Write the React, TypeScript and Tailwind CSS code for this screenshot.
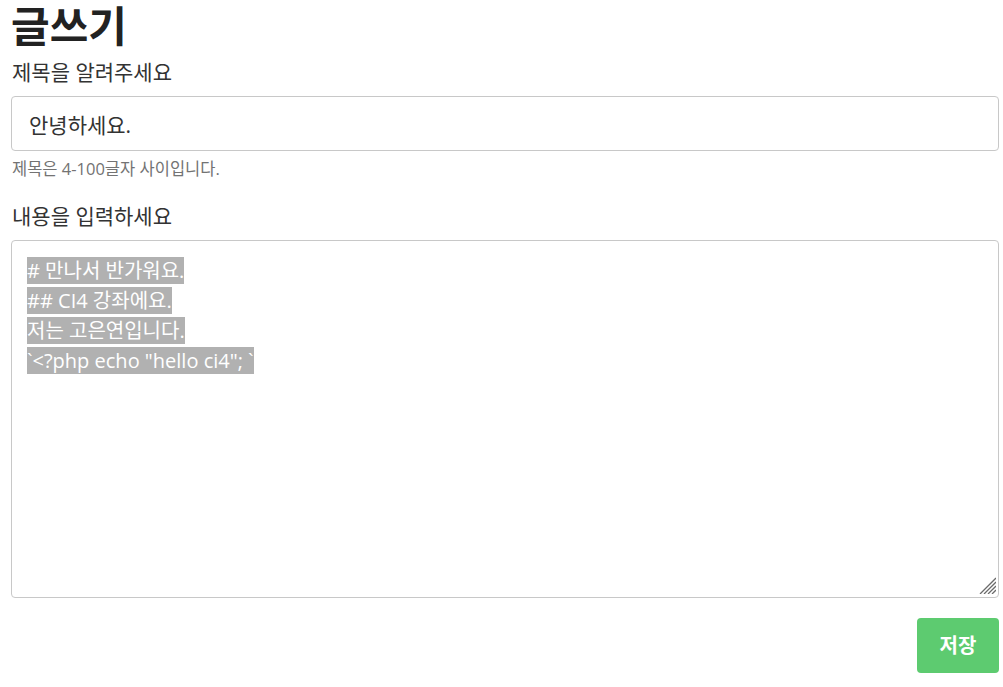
import React from "react";

const lines = ["# 만나서 반가워요.", "## CI4 강좌에요.", "저는 고은연입니다.", '`<?php echo "hello ci4"; `'];

// textarea resize grip, drawn as stripes
function Grip() {
  return (
    <svg width="17" height="17" viewBox="0 0 17 17" className="absolute bottom-[3px] right-[2px]">
      {[1, 5, 9, 13].map((o) => (
        <line key={o} x1={o} y1={17} x2={17} y2={o} stroke="#6b6b6b" strokeWidth="1.3" />
      ))}
    </svg>
  );
}

export default function App() {
  return (
    <div className="min-h-screen bg-white pl-[11px] pr-[4px] text-[#333] font-['Open_Sans','Noto_Sans_CJK_KR',sans-serif]">
      {/* Title */}
      <h1 className="text-[42px] font-bold leading-[52px] text-[#222]">글쓰기</h1>

      <form className="flex flex-col">
        <label className="mt-[6px] pl-[1px] text-[21px] leading-[28px]">제목을 알려주세요</label>
        <input
          defaultValue="안녕하세요."
          className="mt-[10px] h-[55px] rounded-[4px] border border-[#c8c8c8] px-[17px] text-[21px] text-[#333] outline-none"
        />
        <p className="mt-[7px] pl-[1px] text-[16.5px] leading-[22px] text-[#737373]">제목은 4-100글자 사이입니다.</p>

        <label className="mt-[22px] pl-[1px] text-[21px] leading-[28px]">내용을 입력하세요</label>
        {/* Content (selected text look) */}
        <div className="relative mt-[10px] h-[358px] rounded-[4px] border border-[#c8c8c8] px-[15px] pt-[15px] text-[20px] leading-[30px] text-white">
          {lines.map((l) => (
            <div key={l}>
              <span className="bg-[#b1b1b1] whitespace-pre">{l}</span>
            </div>
          ))}
          <Grip />
        </div>

        <div className="mt-[20px] flex justify-end">
          <button
            type="button"
            className="h-[55px] w-[82px] rounded-[4px] bg-[#5dcb70] text-[20px] font-bold text-white"
          >
            저장
          </button>
        </div>
      </form>
    </div>
  );
}
